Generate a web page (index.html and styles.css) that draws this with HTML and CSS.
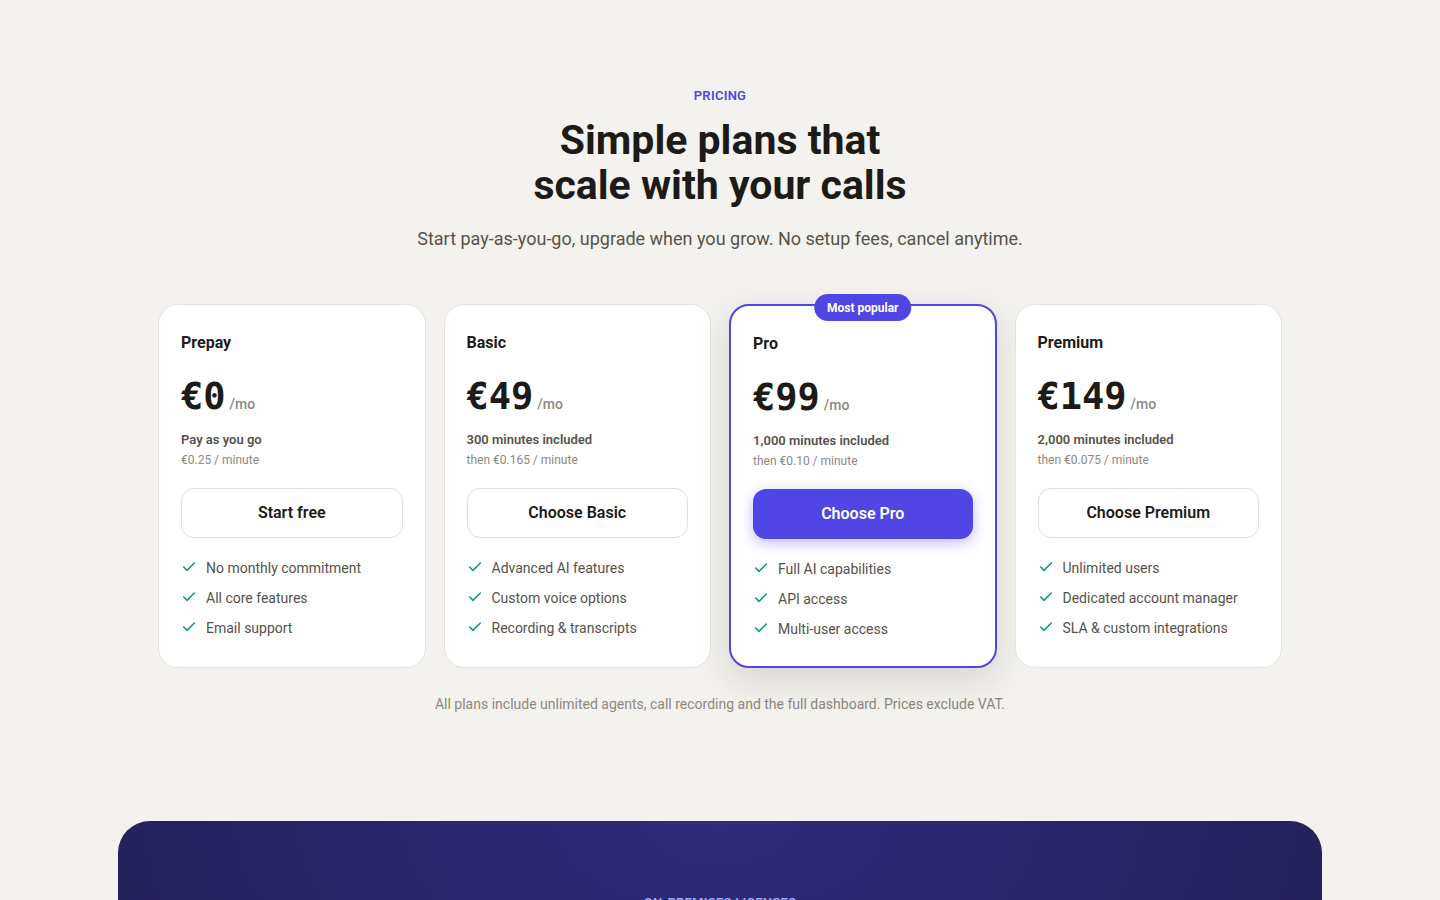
FILE: index.html
```html
<!DOCTYPE html>
<html lang="en">
<head>
<meta charset="utf-8">
<meta name="viewport" content="width=device-width, initial-scale=1">
<title>Pricing</title>
<link rel="stylesheet" href="styles.css">
</head>
<body>
<svg class="sprite" aria-hidden="true">
  <symbol id="check" viewBox="0 0 24 24"><path d="M20 6 9 17l-5-5"/></symbol>
</svg>
<main>
  <section class="pricing">
    <header class="intro">
      <p class="eyebrow">PRICING</p>
      <h2 class="title">Simple plans that<br>scale with your calls</h2>
      <p class="lead">Start pay-as-you-go, upgrade when you grow. No setup fees, cancel anytime.</p>
    </header>
    <div class="plans">
      <article class="plan">
        <h3 class="plan-name">Prepay</h3>
        <p class="price"><span class="amount">€0</span><span class="period">/mo</span></p>
        <p class="minutes">Pay as you go</p>
        <p class="rate">€0.25 / minute</p>
        <button class="choose" type="button">Start free</button>
        <ul class="features">
          <li><svg class="tick" aria-hidden="true"><use href="#check"/></svg>No monthly commitment</li>
          <li><svg class="tick" aria-hidden="true"><use href="#check"/></svg>All core features</li>
          <li><svg class="tick" aria-hidden="true"><use href="#check"/></svg>Email support</li>
        </ul>
      </article>
      <article class="plan">
        <h3 class="plan-name">Basic</h3>
        <p class="price"><span class="amount">€49</span><span class="period">/mo</span></p>
        <p class="minutes">300 minutes included</p>
        <p class="rate">then €0.165 / minute</p>
        <button class="choose" type="button">Choose Basic</button>
        <ul class="features">
          <li><svg class="tick" aria-hidden="true"><use href="#check"/></svg>Advanced AI features</li>
          <li><svg class="tick" aria-hidden="true"><use href="#check"/></svg>Custom voice options</li>
          <li><svg class="tick" aria-hidden="true"><use href="#check"/></svg>Recording &amp; transcripts</li>
        </ul>
      </article>
      <article class="plan plan-featured">
        <span class="badge">Most popular</span>
        <h3 class="plan-name">Pro</h3>
        <p class="price"><span class="amount">€99</span><span class="period">/mo</span></p>
        <p class="minutes">1,000 minutes included</p>
        <p class="rate">then €0.10 / minute</p>
        <button class="choose choose-primary" type="button">Choose Pro</button>
        <ul class="features">
          <li><svg class="tick" aria-hidden="true"><use href="#check"/></svg>Full AI capabilities</li>
          <li><svg class="tick" aria-hidden="true"><use href="#check"/></svg>API access</li>
          <li><svg class="tick" aria-hidden="true"><use href="#check"/></svg>Multi-user access</li>
        </ul>
      </article>
      <article class="plan">
        <h3 class="plan-name">Premium</h3>
        <p class="price"><span class="amount">€149</span><span class="period">/mo</span></p>
        <p class="minutes">2,000 minutes included</p>
        <p class="rate">then €0.075 / minute</p>
        <button class="choose" type="button">Choose Premium</button>
        <ul class="features">
          <li><svg class="tick" aria-hidden="true"><use href="#check"/></svg>Unlimited users</li>
          <li><svg class="tick" aria-hidden="true"><use href="#check"/></svg>Dedicated account manager</li>
          <li><svg class="tick" aria-hidden="true"><use href="#check"/></svg>SLA &amp; custom integrations</li>
        </ul>
      </article>
    </div>
    <p class="note">All plans include unlimited agents, call recording and the full dashboard. Prices exclude VAT.</p>
  </section>
  <section class="licenses">
    <p class="eyebrow eyebrow-light">ON-PREMISES LICENSES</p>
  </section>
</main>
</body>
</html>
```
FILE: styles.css
```css
* { box-sizing: border-box; }
body, h2, h3, p, ul { margin: 0; padding: 0; }

body {
  background: #f4f2ee;
  color: #1c1b18;
  font-family: Roboto, "Liberation Sans", sans-serif;
  font-size: 14px;
  line-height: 20px;
}

.sprite { display: none; }

.pricing {
  max-width: 1204px;
  margin: 0 auto;
  padding: 86px 40px 107px;
}

.intro { text-align: center; }

.eyebrow {
  color: #4f46e5;
  font-size: 13px;
  font-weight: 600;
  letter-spacing: 0.02em;
}

.title {
  margin-top: 12px;
  font-size: 41px;
  font-weight: 700;
  line-height: 45px;
}

.lead {
  margin-top: 17px;
  color: #55524b;
  font-size: 18px;
  line-height: 28px;
}

.plans {
  display: grid;
  grid-template-columns: repeat(4, 1fr);
  gap: 18px;
  margin-top: 51px;
}

.plan {
  position: relative;
  padding: 28px 22px 27px;
  background: #fff;
  border: 1px solid #e6e3dd;
  border-radius: 20px;
}

.plan-featured {
  border: 2px solid #4f46e5;
  box-shadow: 0 12px 36px rgba(28, 27, 24, 0.14);
}

.badge {
  position: absolute;
  top: -12px;
  left: 50%;
  transform: translateX(-50%);
  padding: 4px 13px 3px;
  border-radius: 999px;
  background: #4f46e5;
  color: #fff;
  font-size: 12px;
  font-weight: 700;
  white-space: nowrap;
}

.plan-name {
  font-size: 16px;
  font-weight: 700;
  line-height: 20px;
}

.price {
  display: flex;
  align-items: baseline;
  gap: 4px;
  margin: 23px 0 5px;
  line-height: 42px;
}

.amount {
  font-family: "DejaVu Sans Mono", monospace;
  font-size: 37px;
  font-weight: 700;
}

.period { color: #8c887f; font-size: 14px; font-weight: 500; }

.minutes { color: #55524b; font-size: 13px; font-weight: 600; }

.rate { color: #8c887f; font-size: 12px; }

.choose {
  display: block;
  width: 100%;
  height: 50px;
  margin: 18px 0 20px;
  border: 1px solid #e3e0da;
  border-radius: 13px;
  background: #fff;
  color: #1c1b18;
  font: 600 16px/20px Roboto, "Liberation Sans", sans-serif;
  cursor: pointer;
}

.choose-primary {
  border: 0;
  background: #4f46e5;
  color: #fff;
  box-shadow: 0 4px 14px rgba(79, 70, 229, 0.36);
}

.features {
  display: grid;
  gap: 10px;
  list-style: none;
  color: #55524b;
}

.features li { display: flex; gap: 9px; }

.tick {
  flex: none;
  width: 16px;
  height: 16px;
  margin-top: 1px;
  fill: none;
  stroke: #0f9f73;
  stroke-width: 2.4;
  stroke-linecap: round;
  stroke-linejoin: round;
}

.note {
  margin-top: 26px;
  color: #8c887f;
  text-align: center;
}

.licenses {
  max-width: 1204px;
  min-height: 480px;
  margin: 0 auto;
  padding: 72px 40px;
  border-radius: 32px;
  background: radial-gradient(ellipse 60% 400px at 50% 0, #302b7c, #231f57);
  text-align: center;
}

.eyebrow-light { color: #a5a8f5; }
```
